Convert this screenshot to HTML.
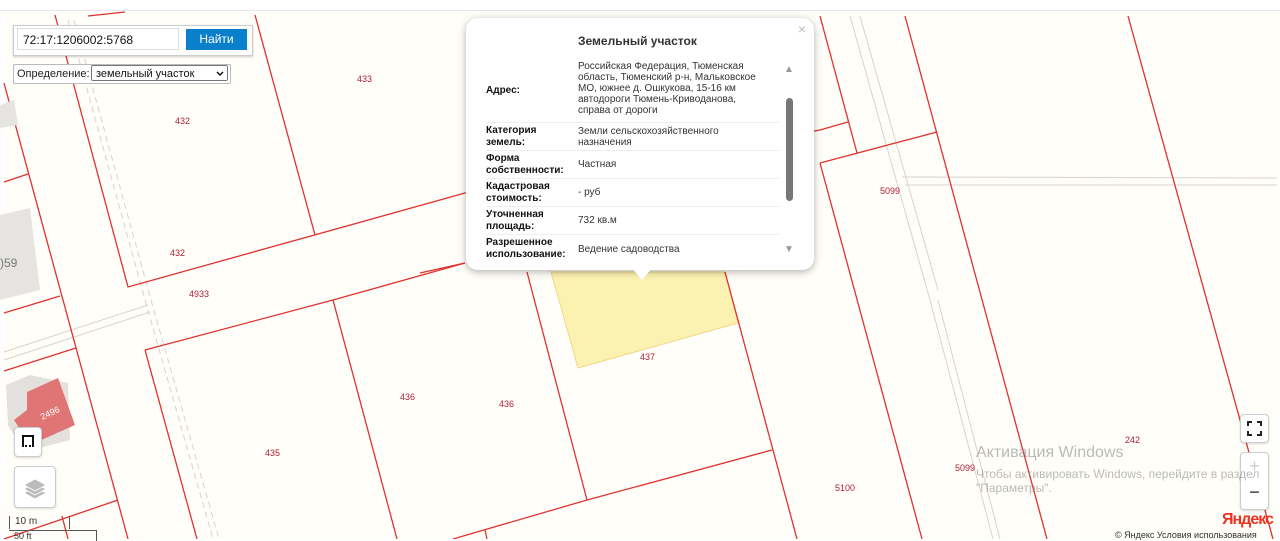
<!DOCTYPE html>
<html><head><meta charset="utf-8"><style>
body{margin:0;width:1280px;height:539px;overflow:hidden;background:#fff;font-family:"Liberation Sans",Arial,sans-serif;position:relative}
svg{position:absolute;left:0;top:0}
.lbl{position:absolute;font-size:9px;color:#b0203a}
.pop{position:absolute;left:466px;top:18px;width:348px;height:252px;background:#fff;border-radius:12px;box-shadow:0 2px 8px rgba(0,0,0,.3)}
.pop .t{position:absolute;left:112px;top:16px;font-size:12px;font-weight:bold;color:#333}
.row{position:absolute;left:20px;width:294px;border-bottom:1px solid #eee;font-size:10px;color:#333}
.row b{position:absolute;left:0;font-weight:bold;color:#111;line-height:12px}
.row span{position:absolute;left:92px;line-height:11px}
.btn{position:absolute;background:#fff;border:1px solid #ccc;border-radius:4px;box-shadow:0 1px 2px rgba(0,0,0,.15)}
</style></head><body>
<div style="position:absolute;left:0;top:10px;width:1280px;height:1px;background:#e6e6e6"></div>
<svg width="1280" height="539">
<rect x="3" y="12" width="1275" height="527" fill="#fffef8"/>
<polygon points="551,272 578,368 738,323 725,272" fill="#fbf1b0" stroke="#f3d78a" stroke-width="1"/>
<g stroke="#d8d2cc" stroke-width="1" fill="none" stroke-dasharray="6,4">
<line x1="68" y1="20" x2="145" y2="300"/><line x1="74" y1="20" x2="151" y2="300"/>
<line x1="145" y1="300" x2="213" y2="539"/><line x1="151" y1="300" x2="219" y2="539"/>
</g>
<g stroke="#dcd2cc" stroke-width="1" fill="none">
<line x1="4" y1="352" x2="148" y2="305"/><line x1="4" y1="360" x2="150" y2="312"/>
<line x1="850" y1="16" x2="930" y2="300"/><line x1="860" y1="16" x2="938" y2="290"/>
<line x1="930" y1="300" x2="993" y2="539"/><line x1="938" y1="300" x2="1000" y2="539"/>
<line x1="902" y1="177" x2="1277" y2="178"/><line x1="905" y1="185" x2="1277" y2="185"/>
</g>
<g stroke="#e0312f" stroke-width="1.3" fill="none">
<polyline points="55,15 128,287 465,193 820,130 848,122"/>
<line x1="255" y1="15" x2="315" y2="235"/>
<line x1="4" y1="83" x2="128" y2="539"/>
<line x1="4" y1="182" x2="28" y2="174"/>
<line x1="88" y1="16" x2="125" y2="12"/>
<line x1="4" y1="313" x2="60" y2="296"/>
<line x1="4" y1="371" x2="76" y2="348"/>
<line x1="4" y1="539" x2="118" y2="500"/>
<line x1="62" y1="516" x2="68" y2="539"/>
<polyline points="145,350 333,300 465,263"/>
<line x1="145" y1="350" x2="197" y2="539"/>
<line x1="333" y1="300" x2="397" y2="539"/>
<line x1="420" y1="273" x2="465" y2="263"/>
<line x1="527" y1="272" x2="587" y2="500"/>
<polyline points="453,539 587,500 772,450"/>
<line x1="485" y1="530" x2="487" y2="539"/>
<line x1="725" y1="272" x2="797" y2="539"/>
<line x1="820" y1="16" x2="857" y2="153"/>
<line x1="820" y1="163" x2="937" y2="132"/>
<line x1="820" y1="163" x2="922" y2="539"/>
<line x1="905" y1="16" x2="1047" y2="539"/>
<line x1="1128" y1="16" x2="1273" y2="539"/>
</g>
<polygon points="0,215 30,208 40,290 0,300" fill="#e6e4e0"/>
<polygon points="0,105 14,100 18,125 0,128" fill="#e6e4e0"/>
<polygon points="6,385 30,375 68,383 70,440 24,452 8,425" fill="#e3e1dd"/>
<polygon points="27,392 58,378 75,425 30,445 14,420 27,410" fill="#e07575"/>
</svg>
<div class="lbl" style="left:357px;top:74px">433</div>
<div class="lbl" style="left:175px;top:116px">432</div>
<div class="lbl" style="left:170px;top:248px">432</div>
<div class="lbl" style="left:189px;top:289px">4933</div>
<div class="lbl" style="left:265px;top:448px">435</div>
<div class="lbl" style="left:400px;top:392px">436</div>
<div class="lbl" style="left:499px;top:399px">436</div>
<div class="lbl" style="left:640px;top:352px">437</div>
<div class="lbl" style="left:880px;top:186px">5099</div>
<div class="lbl" style="left:955px;top:463px">5099</div>
<div class="lbl" style="left:835px;top:483px">5100</div>
<div class="lbl" style="left:1125px;top:435px">242</div>
<div style="position:absolute;left:0;top:256px;font-size:12px;color:#777">)59</div>
<div style="position:absolute;left:40px;top:408px;font-size:9px;color:#fff;transform:rotate(-25deg)">2496</div>

<div style="position:absolute;left:13px;top:25px;width:238px;height:29px;background:#fff;border:1px solid #ccc;box-shadow:0 1px 2px rgba(0,0,0,.2)"></div>
<div style="position:absolute;left:17px;top:28px;width:162px;height:22px;border:1px solid #ddd;font-size:12px;line-height:22px;padding-left:5px;box-sizing:border-box;color:#111">72:17:1206002:5768</div>
<div style="position:absolute;left:186px;top:29px;width:61px;height:21px;background:#0a7fcb;color:#fff;font-size:12px;line-height:21px;text-align:center">Найти</div>
<div style="position:absolute;left:13px;top:64px;width:216px;height:18px;background:#fff;border:1px solid #bbb;border-radius:2px"></div>
<div style="position:absolute;left:17px;top:64px;font-size:11px;line-height:20px;color:#222">Определение:</div>
<div style="position:absolute;left:91px;top:65px;width:137px;height:16px;border:1px solid #777;border-radius:2px;font-size:11px;line-height:16px;padding-left:4px;box-sizing:border-box;color:#111;background:#fff">земельный участок<svg style="left:124px;top:5px" width="8" height="6"><path d="M1 1 L4 4 L7 1" stroke="#111" stroke-width="1.5" fill="none"/></svg></div>

<div class="pop">
<div style="position:absolute;right:8px;top:3px;color:#bbb;font-size:14px">×</div>
<div class="t">Земельный участок</div>
<div style="position:absolute;left:0;top:42px;width:348px;height:200px;overflow:hidden">
<div class="row" style="top:0;height:62px"><b style="top:25px">Адрес:</b><span style="top:1px;width:190px">Российская Федерация, Тюменская область, Тюменский р-н, Мальковское МО, южнее д. Ошкукова, 15-16 км автодороги Тюмень-Криводанова, справа от дороги</span></div>
<div class="row" style="top:63px;height:27px"><b style="top:2px">Категория<br>земель:</b><span style="top:3px">Земли сельскохозяйственного<br>назначения</span></div>
<div class="row" style="top:91px;height:27px"><b style="top:2px">Форма<br>собственности:</b><span style="top:8px">Частная</span></div>
<div class="row" style="top:119px;height:27px"><b style="top:2px">Кадастровая<br>стоимость:</b><span style="top:8px">- руб</span></div>
<div class="row" style="top:147px;height:27px"><b style="top:2px">Уточненная<br>площадь:</b><span style="top:8px">732 кв.м</span></div>
<div class="row" style="top:175px;height:27px;border:0"><b style="top:2px">Разрешенное<br>использование:</b><span style="top:9px">Ведение садоводства</span></div>
</div>
<div style="position:absolute;left:318px;top:46px;font-size:10px;color:#999">▲</div>
<div style="position:absolute;left:320px;top:80px;width:7px;height:103px;background:#777;border-radius:4px"></div>
<div style="position:absolute;left:318px;top:226px;font-size:10px;color:#999">▼</div>
<div style="position:absolute;left:166px;top:250px;width:0;height:0;border-left:10px solid transparent;border-right:10px solid transparent;border-top:12px solid #fff"></div>
</div>

<div class="btn" style="left:14px;top:427px;width:26px;height:28px"><div style="position:absolute;left:7px;top:7px;width:12px;height:12px;border-left:2px solid #111;border-bottom:2px dotted #111;border-top:2px solid #111;border-right:2px solid #111;box-sizing:border-box"></div></div>
<div class="btn" style="left:14px;top:466px;width:40px;height:40px"><svg width="40" height="40"><g fill="#bbb" stroke="#fff" stroke-width="0.8"><polygon points="9,26 20,20 31,26 20,32"/><polygon points="9,22 20,16 31,22 20,28"/><polygon points="9,18 20,12 31,18 20,24"/></g></svg></div>
<div style="position:absolute;left:9px;top:516px;width:54px;height:13px;border-left:1px solid #555;border-right:1px solid #555;font-size:10px;color:#333;padding-left:5px">10 m</div>
<div style="position:absolute;left:9px;top:530px;width:82px;height:10px;border-top:1px solid #555;border-right:1px solid #555;font-size:9px;color:#333;padding-left:5px;overflow:hidden">50 ft</div>

<div class="btn" style="left:1240px;top:414px;width:27px;height:27px"><svg width="27" height="27"><path d="M7 11V7h4M16 7h4v4M20 16v4h-4M11 20H7v-4" stroke="#222" stroke-width="2" fill="none"/></svg></div>
<div class="btn" style="left:1240px;top:452px;width:27px;height:56px"><div style="text-align:center;font-size:18px;color:#ccc;line-height:26px">+</div><div style="text-align:center;font-size:18px;color:#222;line-height:26px">−</div></div>
<div style="position:absolute;left:1222px;top:511px;font-size:16px;color:#e32;font-weight:bold;letter-spacing:-1px">Яндекс</div>
<div style="position:absolute;left:1115px;top:530px;font-size:9px;color:#333;white-space:nowrap">© Яндекс  Условия использования</div>
<div style="position:absolute;left:976px;top:444px;font-size:16px;color:rgba(130,130,130,.55)">Активация Windows</div>
<div style="position:absolute;left:976px;top:467px;font-size:12px;color:rgba(130,130,130,.55);white-space:nowrap">Чтобы активировать Windows, перейдите в раздел<br>"Параметры".</div>
</body></html>
